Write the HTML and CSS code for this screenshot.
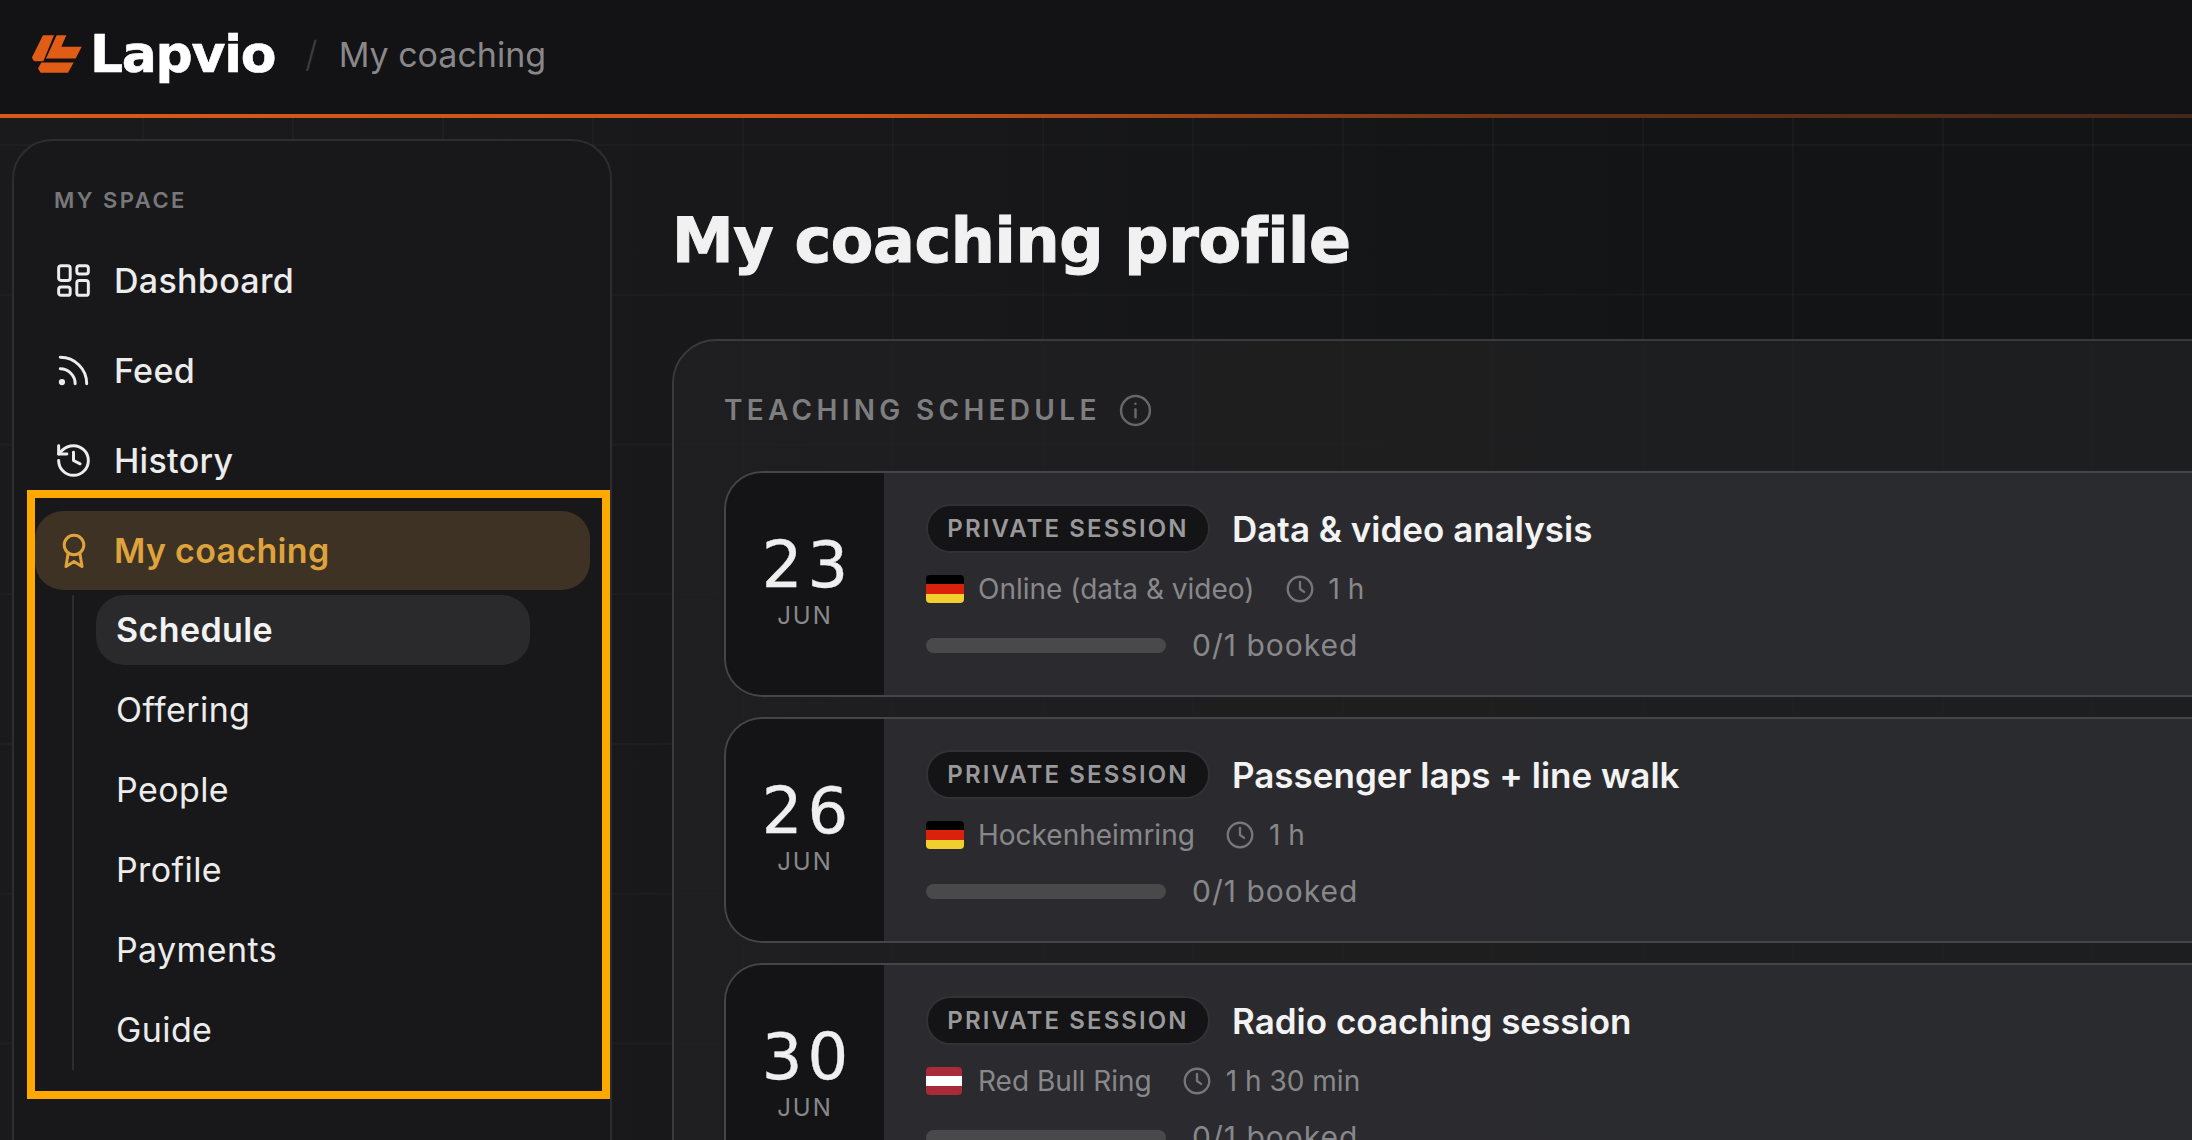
FILE: index.html
```html
<!DOCTYPE html>
<html lang="en">
<head>
    <meta charset="UTF-8">
    <title>My coaching profile - Lapvio</title>
    <link rel="stylesheet" href="styles.css">
</head>
<body>

<header class="topbar">
    <svg class="logo-mark" viewBox="0 0 150 113" fill="#e05c17">
        <path d="M33 0H66L34 78H10Q3 78 0 66Z"/>
        <path d="M74 0H103L88 35H149L131 70H42Z"/>
        <path d="M28 82H125L108 113H26L18 100Z"/>
    </svg>
    <span class="logo-text">Lapvio</span>
    <span class="crumb-sep">/</span>
    <span class="crumb">My coaching</span>
</header>

<div class="shell">
    <aside class="sidebar">
        <div class="nav-label">MY SPACE</div>
        <nav class="nav">
            <a class="nav-item">
                <svg class="nav-icon" viewBox="2 2 20 20"><rect x="3" y="3" width="7" height="9" rx="1.5"/><rect x="14" y="3" width="7" height="5" rx="1.5"/><rect x="14" y="12" width="7" height="9" rx="1.5"/><rect x="3" y="16" width="7" height="5" rx="1.5"/></svg>
                Dashboard
            </a>
            <a class="nav-item">
                <svg class="nav-icon" viewBox="2 2 20 20"><path d="M4 11a9 9 0 0 1 9 9"/><path d="M4 4a16 16 0 0 1 16 16"/><circle cx="5" cy="19" r="1"/></svg>
                Feed
            </a>
            <a class="nav-item">
                <svg class="nav-icon" viewBox="2 2 20 20"><path d="M3 12a9 9 0 1 0 9-9 9.75 9.75 0 0 0-6.74 2.74L3 8"/><path d="M3 3v5h5"/><path d="M12 7v5l4 2"/></svg>
                History
            </a>
            <div class="nav-group">
                <a class="nav-item active">
                    <svg class="nav-icon award" viewBox="0 0 24 35"><circle cx="12" cy="12" r="9.8"/><path d="M6 21L4 33.500L12 28.500L20 33.500L18 21"/></svg>
                    My coaching
                </a>
                <div class="sub-list">
                    <a class="sub-item current">Schedule</a>
                    <a class="sub-item">Offering</a>
                    <a class="sub-item">People</a>
                    <a class="sub-item">Profile</a>
                    <a class="sub-item">Payments</a>
                    <a class="sub-item">Guide</a>
                </div>
                <div class="highlight-box"></div>
            </div>
        </nav>
    </aside>

    <main class="main">
        <h1 class="page-title">My coaching profile</h1>

        <section class="panel">
            <div class="panel-label">
                TEACHING SCHEDULE
                <svg class="info-icon" viewBox="0 0 24 24"><circle cx="12" cy="12" r="10.500"/><path d="M12 11v6"/><path d="M12 7v.01"/></svg>
            </div>

            <div class="card-list">
                <article class="card">
                    <div class="date"><span class="date-day">23</span><span class="date-month">JUN</span></div>
                    <div class="card-body">
                        <div class="card-head"><span class="tag">PRIVATE SESSION</span><span class="card-title">Data &amp; video analysis</span></div>
                        <div class="card-meta">
                            <span class="flag flag-de"><i></i><i></i><i></i></span>
                            <span>Online (data &amp; video)</span>
                            <svg class="clock" viewBox="0 0 24 24"><circle cx="12" cy="12" r="10.500"/><path d="M12 6v6l3.500 2.500"/></svg>
                            <span>1 h</span>
                        </div>
                        <div class="card-seats"><span class="bar"></span><span>0/1 booked</span></div>
                    </div>
                </article>

                <article class="card">
                    <div class="date"><span class="date-day">26</span><span class="date-month">JUN</span></div>
                    <div class="card-body">
                        <div class="card-head"><span class="tag">PRIVATE SESSION</span><span class="card-title">Passenger laps + line walk</span></div>
                        <div class="card-meta">
                            <span class="flag flag-de"><i></i><i></i><i></i></span>
                            <span>Hockenheimring</span>
                            <svg class="clock" viewBox="0 0 24 24"><circle cx="12" cy="12" r="10.500"/><path d="M12 6v6l3.500 2.500"/></svg>
                            <span>1 h</span>
                        </div>
                        <div class="card-seats"><span class="bar"></span><span>0/1 booked</span></div>
                    </div>
                </article>

                <article class="card">
                    <div class="date"><span class="date-day">30</span><span class="date-month">JUN</span></div>
                    <div class="card-body">
                        <div class="card-head"><span class="tag">PRIVATE SESSION</span><span class="card-title">Radio coaching session</span></div>
                        <div class="card-meta">
                            <span class="flag flag-at"><i></i><i></i><i></i></span>
                            <span>Red Bull Ring</span>
                            <svg class="clock" viewBox="0 0 24 24"><circle cx="12" cy="12" r="10.500"/><path d="M12 6v6l3.500 2.500"/></svg>
                            <span>1 h 30 min</span>
                        </div>
                        <div class="card-seats"><span class="bar"></span><span>0/1 booked</span></div>
                    </div>
                </article>
            </div>
        </section>
    </main>
</div>

</body>
</html>
```

FILE: styles.css
```css
* {
    box-sizing: border-box;
}
html, body {
    margin: 0;
    height: 1140px;
    overflow: hidden;
}
body {
    font-family: Inter, "Liberation Sans", sans-serif;
    background: #141416;
    color: #e8e8e8;
}

/* top bar */
.topbar {
    height: 118px;
    padding: 0 0 6px 32px;
    display: flex;
    align-items: center;
    background: #131315;
    border-bottom: 4px solid;
    border-image: linear-gradient(to right, #d85a18, #c4521a 40%, #6a3315 70%, #43281a) 1;
}
.logo-mark {
    width: 50px;
    height: 38px;
    flex-shrink: 0;
}
.logo-text {
    margin-left: 8px;
    font-family: "DejaVu Sans", sans-serif;
    font-size: 52px;
    font-weight: 700;
    letter-spacing: -1.300px;
    -webkit-text-stroke: 0.6px #fff;
    color: #fff;
}
.crumb-sep {
    margin-left: 30px;
    font-size: 36px;
    font-weight: 300;
    color: #3c3c3e;
}
.crumb {
    margin-left: 21px;
    font-size: 34px;
    color: #88888a;
}

/* layout */
.shell {
    height: 1022px;
    display: flex;
    overflow: hidden;
    background-color: #161618;
    background-image:
        linear-gradient(to right, rgba(255,255,255,0.025) 2px, transparent 2px),
        linear-gradient(to bottom, rgba(255,255,255,0.025) 2px, transparent 2px),
        linear-gradient(to right, #1a1a1c, #18181a 40%, #131416 75%);
    background-size: 150px 149.75px, 150px 149.75px, 100% 100%;
    background-position: 142px 26px, 142px 26px, 0 0;
}

/* sidebar */
.sidebar {
    width: 600px;
    height: 1100px;
    flex-shrink: 0;
    margin: 21px 0 0 12px;
    padding: 47px 20px 0 21px;
    background: #18181a;
    border: 2px solid #2d2d2f;
    border-radius: 40px;
}
.nav-label {
    height: 24px;
    margin: 0 0 29px 19px;
    font-size: 22px;
    line-height: 24px;
    font-weight: 600;
    letter-spacing: 2.500px;
    color: #78787b;
}
.nav {
    display: flex;
    flex-direction: column;
    gap: 11px;
}
.nav-item {
    height: 79px;
    padding-left: 22px;
    display: flex;
    align-items: center;
    gap: 24px;
    border-radius: 28px;
    font-size: 34px;
    font-weight: 500;
    letter-spacing: 0.3px;
    color: #ececec;
}
.nav-icon {
    width: 33px;
    height: 33px;
    flex-shrink: 0;
    fill: none;
    stroke: currentColor;
    stroke-width: 1.800;
    stroke-linecap: round;
    stroke-linejoin: round;
}
.nav-icon.award {
    height: 35px;
    width: 24px;
    margin: 0 4px 0 5px;
    stroke-width: 3;
}
.nav-item.active {
    background: #3d3223;
    color: #dfa33d;
    font-weight: 600;
}
.nav-group {
    position: relative;
}
.sub-list {
    margin: 5px 60px 0 37px;
    padding: 0 0 5px 22px;
    border-left: 2px solid #2d2d2f;
    display: flex;
    flex-direction: column;
    gap: 10px;
}
.sub-item {
    height: 70px;
    padding: 0 0 2px 20px;
    display: flex;
    align-items: center;
    border-radius: 28px;
    font-size: 34px;
    letter-spacing: 0.4px;
    color: #ececec;
}
.sub-item.current {
    background: #2a2a2c;
    font-weight: 600;
    color: #f2f2f2;
}
.highlight-box {
    position: absolute;
    top: -21px;
    left: -8px;
    right: -20px;
    bottom: -29px;
    border: 8px solid #ffa800;
    pointer-events: none;
}

/* main */
.main {
    flex: 1;
    min-width: 0;
    padding: 82px 0 0 60px;
}
.page-title {
    margin: 0 0 59px;
    height: 80px;
    font-family: "DejaVu Sans", sans-serif;
    font-size: 62px;
    line-height: 82px;
    font-weight: 700;
    letter-spacing: -0.4px;
    -webkit-text-stroke: 1px #f1f1f1;
    color: #f1f1f1;
}
.panel {
    margin-right: -80px;
    padding: 51px 0 0 50px;
    background: rgba(32,32,34,0.8);
    border: 2px solid #3a3a3c;
    border-radius: 44px;
    height: 900px;
}
.panel-label {
    height: 36px;
    margin: 0 0 43px 0;
    display: flex;
    align-items: center;
    gap: 18px;
    font-size: 28px;
    font-weight: 600;
    letter-spacing: 4.300px;
    color: #7e7e80;
}
.info-icon {
    width: 33px;
    height: 33px;
    fill: none;
    stroke: #66666a;
    stroke-width: 1.800;
    stroke-linecap: round;
}
.card-list {
    display: flex;
    flex-direction: column;
    gap: 20px;
}
.card {
    height: 226px;
    display: flex;
    background: rgba(46,46,51,0.8);
    border: 2px solid #454547;
    border-right: 0;
    border-radius: 38px 0 0 38px;
    overflow: hidden;
}
.date {
    width: 158px;
    flex-shrink: 0;
    padding: 61px 0 0 5px;
    display: flex;
    flex-direction: column;
    align-items: center;
    background: #141416;
}
.date-day {
    font-family: "DejaVu Sans", sans-serif;
    font-size: 64px;
    line-height: 62px;
    letter-spacing: 5px;
    -webkit-text-stroke: 0.4px #efefef;
    color: #efefef;
}
.date-month {
    margin: 5px 0 0 -5px;
    font-size: 24px;
    line-height: 30px;
    letter-spacing: 2px;
    color: #88888a;
}
.card-body {
    padding: 31px 0 0 42px;
    flex: 1;
}
.card-head {
    display: flex;
    align-items: center;
    gap: 22px;
}
.tag {
    height: 49px;
    width: 284px;
    display: flex;
    align-items: center;
    justify-content: center;
    background: #141416;
    border: 2px solid #323235;
    border-radius: 25px;
    font-size: 24px;
    font-weight: 600;
    letter-spacing: 2.100px;
    color: #99999b;
}
.card-title {
    font-size: 35px;
    font-weight: 600;
    color: #f3f3f3;
}
.card-meta {
    height: 28px;
    margin-top: 22px;
    display: flex;
    align-items: center;
    font-size: 28px;
    color: #88888a;
}
.flag {
    width: 38px;
    height: 28px;
    margin-right: 14px;
    display: flex;
    flex-direction: column;
    border-radius: 4px;
    overflow: hidden;
}
.flag i {
    flex: 1;
}
.flag-de i:nth-child(1) { background: #000; }
.flag-de i:nth-child(2) { background: #d9210c; }
.flag-de i:nth-child(3) { background: #f0cf2e; }
.flag-at { width: 36px; margin-right: 16px; }
.flag-at i:nth-child(1) { background: #a92a3a; }
.flag-at i:nth-child(2) { background: #fff; }
.flag-at i:nth-child(3) { background: #a92a3a; }
.clock {
    width: 28px;
    height: 28px;
    margin: 0 15px 0 31px;
    fill: none;
    stroke: #77777a;
    stroke-width: 2;
    stroke-linecap: round;
    stroke-linejoin: round;
}
.card-seats {
    height: 34px;
    margin-top: 25px;
    display: flex;
    align-items: center;
    gap: 26px;
    font-size: 30px;
    letter-spacing: 1px;
    color: #88888a;
}
.bar {
    width: 240px;
    height: 15px;
    border-radius: 8px;
    background: #49494b;
}
```
